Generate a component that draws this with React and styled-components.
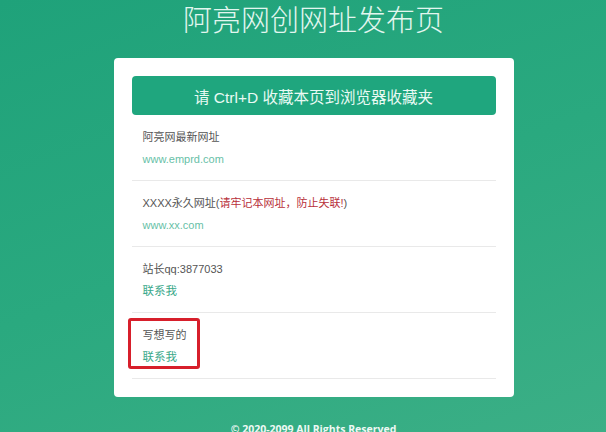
import styled, { createGlobalStyle } from "styled-components";

const GlobalStyle = createGlobalStyle`
  html, body {
    margin: 0;
    padding: 0;
  }
  body {
    min-height: 100vh;
    overflow: hidden;
    background: linear-gradient(160deg, #1fa27a 0%, #2aa97f 50%, #3caf86 100%);
    font-family: "Liberation Sans", "Noto Sans CJK SC", sans-serif;
  }
`;

const Page = styled.div`
  padding-left: 21px;
`;

const Container = styled.div`
  width: 400px;
  margin: 0 auto;
`;

const Title = styled.h1`
  margin: 0;
  font-family: "Noto Sans CJK SC", sans-serif;
  font-size: 29px;
  line-height: 36px;
  font-weight: 300;
  text-align: center;
  color: #e2f6ef;
`;

const Card = styled.div`
  margin-top: 22px;
  background: #fff;
  border-radius: 4px;
  padding: 18px;
  box-sizing: border-box;
`;

const BookmarkButton = styled.div`
  height: 39px;
  display: flex;
  align-items: center;
  justify-content: center;
  background: #1fa67e;
  color: #e9faf4;
  font-size: 15.5px;
  border-radius: 4px;
`;

const Row = styled.div`
  position: relative;
  padding: 14px 11px 13px;
  border-bottom: 1px solid #e9e9e9;
`;

const RowTitle = styled.div`
  font-size: 11px;
  line-height: 16px;
  color: #555;
`;

const Warn = styled.span`
  color: #b8303a;
`;

const RowLink = styled.a`
  display: block;
  margin-top: 6px;
  font-size: ${(p) => (p.$contact ? "11.5px" : "11px")};
  line-height: 16px;
  color: ${(p) => (p.$contact ? "#3aa88a" : "#68bfa7")};
  text-decoration: none;
`;

const Highlight = styled.div`
  position: absolute;
  left: -4px;
  top: 5px;
  width: 72px;
  height: 51px;
  border: 3px solid #d71f2b;
  border-radius: 3px;
  box-sizing: border-box;
`;

const Footer = styled.div`
  margin-top: 24px;
  text-align: center;
  font-family: "Open Sans", sans-serif;
  font-weight: 700;
  font-size: 10.5px;
  line-height: 16px;
  color: #eef9f5;
`;

const rows = [
  { title: "阿亮网最新网址", link: "www.emprd.com" },
  {
    title: (
      <>
        XXXX永久网址(<Warn>请牢记本网址，防止失联!</Warn>)
      </>
    ),
    link: "www.xx.com",
  },
  { title: "站长qq:3877033", link: "联系我", contact: true },
  { title: "写想写的", link: "联系我", contact: true, marked: true },
];

export default function App() {
  return (
    <>
      <GlobalStyle />
      <Page>
        <Container>
          <Title>阿亮网创网址发布页</Title>
          <Card>
            <BookmarkButton>请 Ctrl+D 收藏本页到浏览器收藏夹</BookmarkButton>
            {rows.map((r, i) => (
              <Row key={i}>
                <RowTitle>{r.title}</RowTitle>
                <RowLink href="#" $contact={r.contact}>
                  {r.link}
                </RowLink>
                {r.marked && <Highlight />}
              </Row>
            ))}
          </Card>
          <Footer>© 2020-2099 All Rights Reserved</Footer>
        </Container>
      </Page>
    </>
  );
}
